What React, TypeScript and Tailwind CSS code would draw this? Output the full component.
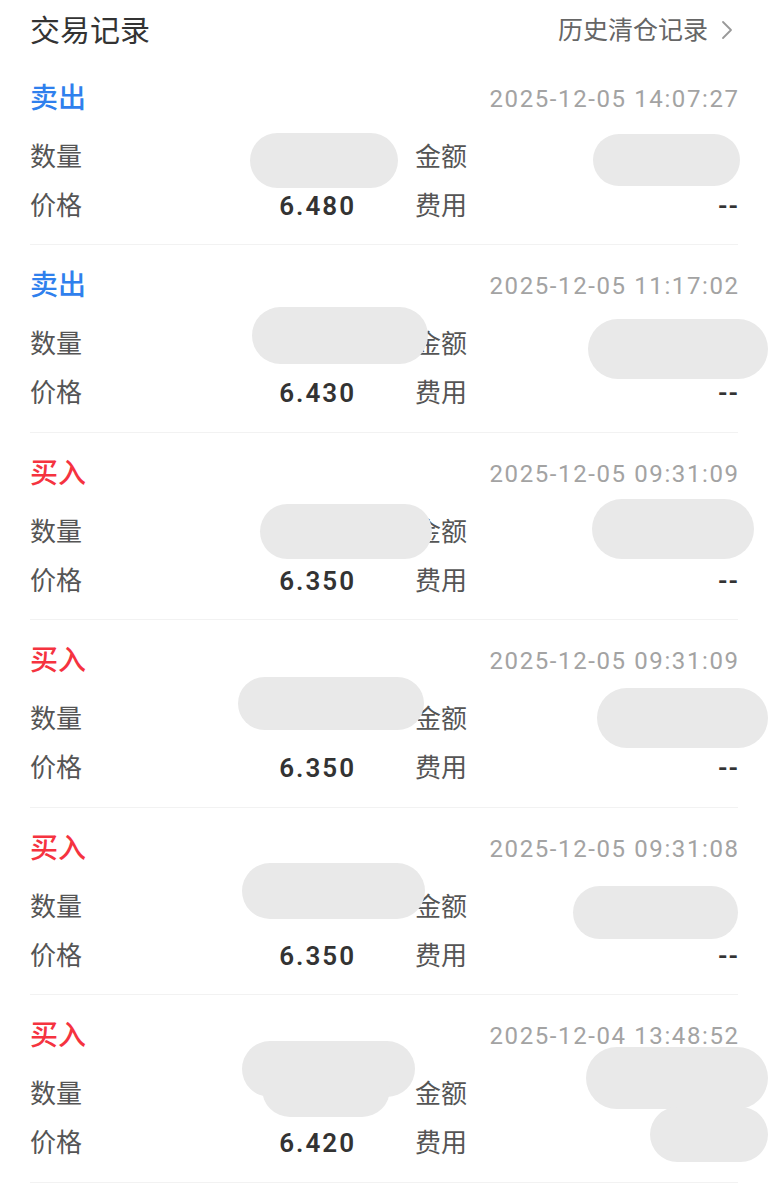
const trades = [
  {
    side: "卖出",
    time: "2025-12-05 14:07:27",
    price: "6.480",
    blobs: [
      { x: 250, y: 75, w: 148, h: 55 },
      { x: 593, y: 76, w: 147, h: 52 },
    ],
  },
  {
    side: "卖出",
    time: "2025-12-05 11:17:02",
    price: "6.430",
    blobs: [
      { x: 252, y: 62, w: 176, h: 57 },
      { x: 588, y: 74, w: 180, h: 60 },
    ],
  },
  {
    side: "买入",
    time: "2025-12-05 09:31:09",
    price: "6.350",
    blobs: [
      { x: 260, y: 71, w: 172, h: 55 },
      { x: 592, y: 66, w: 162, h: 60 },
    ],
  },
  {
    side: "买入",
    time: "2025-12-05 09:31:09",
    price: "6.350",
    blobs: [
      { x: 238, y: 57, w: 186, h: 53 },
      { x: 597, y: 68, w: 171, h: 60 },
    ],
  },
  {
    side: "买入",
    time: "2025-12-05 09:31:08",
    price: "6.350",
    blobs: [
      { x: 242, y: 55, w: 183, h: 56 },
      { x: 573, y: 78, w: 165, h: 53 },
    ],
  },
  {
    side: "买入",
    time: "2025-12-04 13:48:52",
    price: "6.420",
    blobs: [
      { x: 242, y: 46, w: 173, h: 56 },
      { x: 262, y: 66, w: 128, h: 56 },
      { x: 586, y: 52, w: 182, h: 62 },
      { x: 650, y: 112, w: 118, h: 55 },
    ],
  },
];

function TradeCard({ t }: { t: (typeof trades)[number] }) {
  const buy = t.side === "买入";
  return (
    <div className="relative mx-[30px] border-b border-[#f2f2f2] pt-[23px] pb-[13.5px]">
      <div className="flex h-9 items-center justify-between">
        <span className={`text-[28px] font-medium ${buy ? "text-[#f5333f]" : "text-[#2f80ed]"}`}>{t.side}</span>
        <span className="-mr-[1.6px] text-[24px] tracking-[1.6px] text-[#a3a3a3]">{t.time}</span>
      </div>
      <div className="mt-[16px] grid grid-cols-[324px_1fr] text-[26px]">
        <div className="flex h-[49px] items-center justify-between">
          <span className="text-[#555]">数量</span>
        </div>
        <div className="flex h-[49px] items-center justify-between pl-[61px]">
          <span className="text-[#555]">金额</span>
        </div>
        <div className="flex h-[49px] items-center justify-between">
          <span className="text-[#555]">价格</span>
          <span className="-mr-[2px] text-[26px] font-semibold tracking-[2px] text-[#333]">{t.price}</span>
        </div>
        <div className="flex h-[49px] items-center justify-between pl-[61px]">
          <span className="text-[#555]">费用</span>
          <span className="-mr-[1px] text-[26px] font-semibold tracking-[1px] text-[#333]">--</span>
        </div>
      </div>
      {t.blobs.map((b, i) => (
        <div
          key={i}
          className="absolute rounded-full bg-[#e9e9e9]"
          style={{ left: b.x - 30, top: b.y, width: b.w, height: b.h }}
        />
      ))}
    </div>
  );
}

export default function App() {
  return (
    <div
      className="h-[1194px] w-[768px] overflow-hidden bg-white"
      style={{ fontFamily: 'Roboto, "Noto Sans CJK SC", sans-serif' }}
    >
      <div className="flex h-[57.5px] items-center justify-between px-[30px] pt-[3px]">
        <span className="text-[30px] text-[#333]">交易记录</span>
        <span className="flex items-center gap-[13px] pr-[5px] text-[25px] text-[#666]">
          历史清仓记录
          <svg width="12" height="20" viewBox="0 0 12 20" fill="none">
            <path d="M2 2l8 8-8 8" stroke="#999" strokeWidth="1.8" strokeLinecap="round" strokeLinejoin="round" />
          </svg>
        </span>
      </div>
      {trades.map((t, i) => (
        <TradeCard key={i} t={t} />
      ))}
    </div>
  );
}
